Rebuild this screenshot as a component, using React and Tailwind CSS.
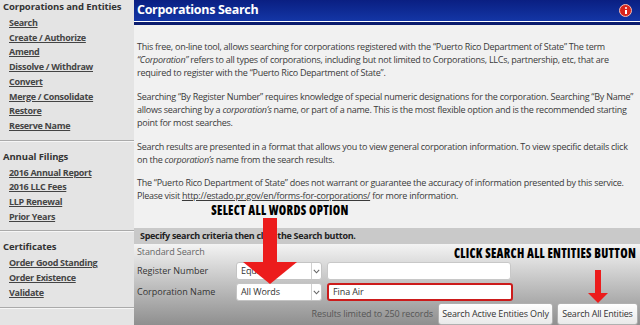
import React from "react";

const sections = [
  {
    title: "Corporations and Entities",
    links: ["Search", "Create / Authorize", "Amend", "Dissolve / Withdraw", "Convert", "Merge / Consolidate", "Restore", "Reserve Name"],
  },
  {
    title: "Annual Filings",
    links: ["2016 Annual Report", "2016 LLC Fees", "LLP Renewal", "Prior Years"],
  },
  {
    title: "Certificates",
    links: ["Order Good Standing", "Order Existence", "Validate"],
  },
];

function Chevron() {
  return (
    <svg width="7" height="5" viewBox="0 0 7 5">
      <path d="M0.8 0.8 L3.5 3.8 L6.2 0.8" fill="none" stroke="#666" strokeWidth="1.1" />
    </svg>
  );
}

function Select({ value }) {
  return (
    <div className="w-[86px] h-[18px] flex bg-white border border-[#c4c4c4] rounded-[3px]">
      <div className="flex-1 pl-[4px] flex items-center text-[#333] tracking-[-0.1px]">{value}</div>
      <div className="w-[10px] border-l border-[#d0d0d0] flex items-center justify-center">
        <Chevron />
      </div>
    </div>
  );
}

export default function App() {
  return (
    <div className="relative w-[640px] h-[325px] flex overflow-hidden font-['Open_Sans',sans-serif] text-[9px] text-[#333]">
      {/* sidebar */}
      <aside className="w-[134px] shrink-0 bg-[#e4e4e4] flex flex-col">
        {sections.map((s, i) => (
          <div
            key={s.title}
            className={`${i === 0 ? "" : "pt-[9px]"} pb-[6px] border-b border-[#aaaaaa] shadow-[0_1px_0_#f6f6f6]`}
          >
            <div className="pl-[3px] font-bold text-[9.5px] tracking-[-0.1px] leading-[14px] text-[#333] whitespace-nowrap">
              {s.title}
            </div>
            <ul className="mt-[2px] pl-[9px]">
              {s.links.map((l) => (
                <li key={l} className="leading-[14.7px] font-bold tracking-[-0.3px] underline text-[#444] whitespace-nowrap">
                  {l}
                </li>
              ))}
            </ul>
          </div>
        ))}
      </aside>

      {/* main */}
      <main className="flex-1 flex flex-col bg-[#f1f1f1]">
        <div className="h-[21px] bg-gradient-to-b from-[#0a1f82] to-[#1436a6] flex items-center justify-between pl-[3px] pr-[8px]">
          <span className="text-white font-bold text-[12.5px] tracking-[-0.3px]">Corporations Search</span>
          <span className="w-[13px] h-[13px] rounded-full bg-[#d9241c] border border-[#f3c0b8] flex flex-col items-center justify-center gap-[1px]">
            <span className="w-[2px] h-[2px] rounded-full bg-white" />
            <span className="w-[2px] h-[4px] bg-white" />
          </span>
        </div>
        <div className="h-[1px] bg-white" />
        <div className="h-[3px] bg-[#0b1c6e]" />

        <div className="pl-[3px] pr-[6px] pt-[15px] leading-[13px] tracking-[-0.26px] text-[#3a3a3a] whitespace-nowrap">
          <p className="mb-[11px]">
            This free, on-line tool, allows searching for corporations registered with the “Puerto Rico Department of State” The term
            <br />
            <i>“Corporation”</i> refers to all types of corporations, including but not limited to Corporations, LLCs, partnership, etc, that are
            <br />
            required to register with the “Puerto Rico Department of State”.
          </p>
          <p className="mb-[11px]">
            Searching “By Register Number” requires knowledge of special numeric designations for the corporation. Searching “By Name”
            <br />
            allows searching by a <i>corporation’s</i> name, or part of a name. This is the most flexible option and is the recommended starting
            <br />
            point for most searches.
          </p>
          <p className="mb-[10px]">
            Search results are presented in a format that allows you to view general corporation information. To view specific details click
            <br />
            on the <i>corporation’s</i> name from the search results.
          </p>
          <p>
            The “Puerto Rico Department of State” does not warrant or guarantee the accuracy of information presented by this service.
            <br />
            Please visit <span className="underline">http://estado.pr.gov/en/forms-for-corporations/</span> for more information.
          </p>
        </div>

        {/* search panel */}
        <div className="mt-auto h-[97px] flex flex-col">
          <div className="h-[16px] bg-[#c9c9c9] pl-[6px] flex items-center font-bold tracking-[-0.3px] text-[#222] whitespace-nowrap">
            Specify search criteria then click the Search button.
          </div>
          <div className="flex-1 bg-gradient-to-b from-[#f4f4f4] to-[#8f8f8f] pl-[3px] pr-[2px]">
            <div className="mt-[1px] leading-[14px] tracking-[-0.1px] text-[#666]">Standard Search</div>
            <div className="mt-[3px] flex items-center">
              <div className="w-[99px] text-[#333]">Register Number</div>
              <Select value="Equals" />
              <div className="ml-[5px] w-[184px] h-[18px] bg-white border border-[#c8c8c8] rounded-[3px]" />
            </div>
            <div className="mt-[3px] flex items-center">
              <div className="w-[99px] text-[#333]">Corporation Name</div>
              <Select value="All Words" />
              <div className="ml-[5px] w-[186px] h-[18px] bg-white border-2 border-[#cc1b1b] rounded-[3px] pl-[4px] flex items-center text-[#333] tracking-[-0.1px]">
                Fina Air
              </div>
            </div>
            <div className="mt-[2px] flex items-center justify-end gap-[4px]">
              <span className="mr-[1px] text-[#555] tracking-[-0.1px] whitespace-nowrap">Results limited to 250 records</span>
              <button className="w-[115px] h-[22px] bg-gradient-to-b from-white to-[#e9e9e9] border border-[#b0b0b0] rounded-[3px] text-[#333] tracking-[-0.15px] whitespace-nowrap">
                Search Active Entities Only
              </button>
              <button className="w-[81px] h-[22px] bg-gradient-to-b from-white to-[#e9e9e9] border border-[#b0b0b0] rounded-[3px] text-[#333] tracking-[-0.2px] whitespace-nowrap">
                Search All Entities
              </button>
            </div>
          </div>
        </div>
      </main>

      {/* annotations */}
      <div className="absolute left-[200px] top-[203px] w-[160px] text-center whitespace-nowrap font-['Open_Sans',sans-serif] font-extrabold font-stretch-[75%] text-[12px] leading-[14px] text-black tracking-[0.3px]">
        <span className="inline-block scale-y-[1.2]">SELECT ALL WORDS OPTION</span>
      </div>
      <svg className="absolute left-[243px] top-[218px]" width="54" height="66" viewBox="0 0 54 66">
        <rect x="20" y="0" width="14" height="45" fill="#ec1c1c" />
        <polygon points="0,44 54,44 27,66" fill="#ec1c1c" />
      </svg>
      <div className="absolute left-[440px] top-[246px] w-[210px] text-center whitespace-nowrap font-['Open_Sans',sans-serif] font-extrabold font-stretch-[75%] text-[12px] leading-[14px] text-black tracking-[0.3px]">
        <span className="inline-block scale-y-[1.2]">CLICK SEARCH ALL ENTITIES BUTTON</span>
      </div>
      <svg className="absolute left-[588px] top-[270px]" width="20" height="33" viewBox="0 0 20 33">
        <rect x="7" y="0" width="6" height="24" fill="#ec1c1c" />
        <polygon points="0,23 20,23 10,33" fill="#ec1c1c" />
      </svg>
    </div>
  );
}
